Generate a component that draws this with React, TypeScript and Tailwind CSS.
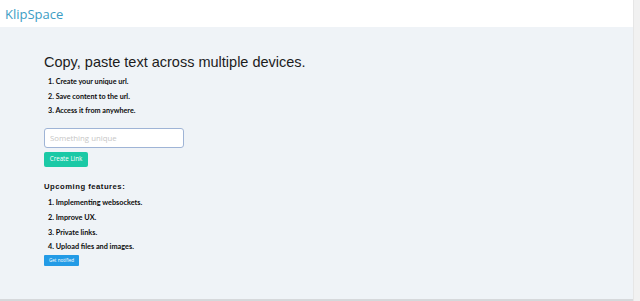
import React from "react";

export default function App() {
  const steps = ["Create your unique url.", "Save content to the url.", "Access it from anywhere."];
  const features = ["Implementing websockets.", "Improve UX.", "Private links.", "Upload files and images."];
  return (
    <div className="w-[640px] h-[301px] overflow-hidden flex bg-[#eff3f7]">
      <div className="flex-1 flex flex-col">
        <header className="h-[27px] shrink-0 bg-white flex items-center pl-[5px] pt-[2px]">
          <span className="text-[13px] text-[#3c9dc4] leading-none font-['Open_Sans',sans-serif]">KlipSpace</span>
        </header>
        <main className="flex-1 pl-[44px] pt-[28px]">
          <h1 className="text-[14.5px] leading-none text-[#1c1c1c] font-['Liberation_Sans',Arial,sans-serif]">
            Copy, paste text across multiple devices.
          </h1>
          <ol className="mt-[8.5px] pl-[4px] flex flex-col gap-[6.6px] text-[7.2px] font-bold text-[#0c0c0c] leading-[8px] font-['Lato',sans-serif]">
            {steps.map((s, i) => (
              <li key={i}>{i + 1}. {s}</li>
            ))}
          </ol>
          <input
            placeholder="Something unique"
            className="mt-[12.5px] block w-[140px] h-[20px] rounded-[3px] border border-[#9fb4d6] bg-white px-[5px] text-[7.8px] placeholder:text-[#c6c6c6] outline-none font-['Open_Sans',sans-serif]"
          />
          <button className="mt-[4px] block w-[44px] h-[15px] rounded-[2px] bg-[#1bc9a6] text-white text-[6.2px] leading-none font-['Open_Sans',sans-serif]">
            Create Link
          </button>
          <h2 className="mt-[16.5px] text-[7.7px] font-bold tracking-[0.5px] text-[#111] leading-none font-['Liberation_Sans',Arial,sans-serif]">
            Upcoming features:
          </h2>
          <ol className="mt-[8.5px] pl-[4px] flex flex-col gap-[6.6px] text-[7.3px] font-bold text-[#0c0c0c] leading-[8px] font-['Lato',sans-serif]">
            {features.map((s, i) => (
              <li key={i}>{i + 1}. {s}</li>
            ))}
          </ol>
          <button className="mt-[3.5px] block w-[35px] h-[11px] rounded-[1px] bg-[#239be6] text-white text-[4.6px] leading-none font-['Open_Sans',sans-serif]">
            Get notified
          </button>
        </main>
        <div className="h-[2px] shrink-0 bg-[#d6d8db]" />
      </div>
      <div className="w-[7px] bg-[#f1f1f1] border-l border-[#e6e6e6]" />
    </div>
  );
}
